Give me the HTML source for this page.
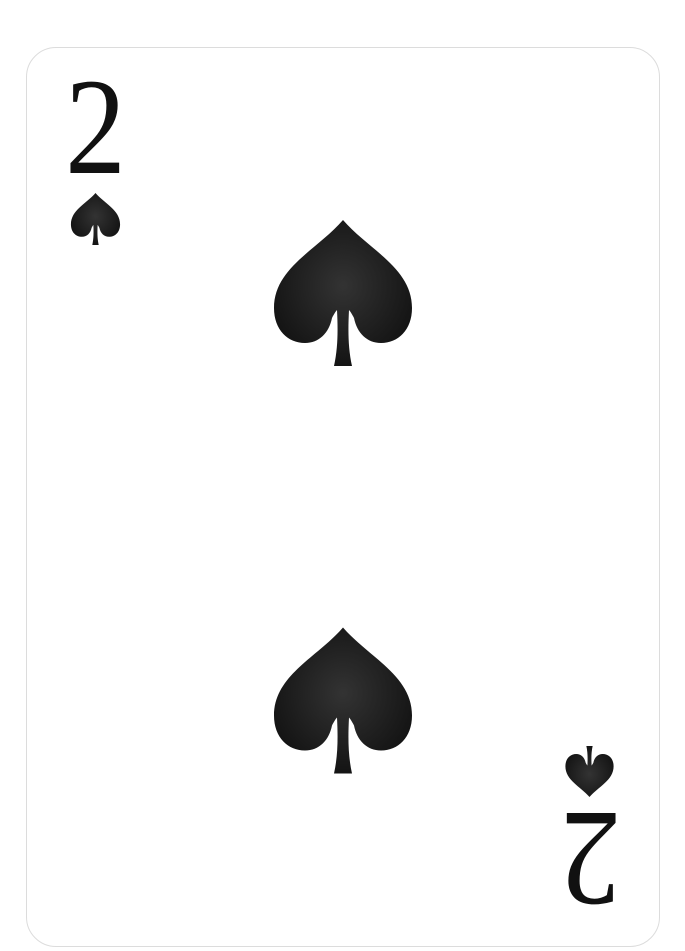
<!DOCTYPE html>
<html><head><style>
body{margin:0;width:685px;height:951px;background:#fff;position:relative;overflow:hidden}
.card{position:absolute;left:26px;top:47px;width:634px;height:900px;border:1px solid #dcdcdc;border-radius:30px;box-sizing:border-box}
.num{position:absolute;font-family:"Liberation Serif",serif;font-size:138px;line-height:1;color:#111;width:69px;height:100px;text-align:center}
.num span{display:block;transform:scaleX(0.88)}
svg{position:absolute}
</style></head><body>
<div class="card"></div>
<svg width="0" height="0" style="position:absolute"><defs>
<radialGradient id="g" cx="0.5" cy="0.45" r="0.6"><stop offset="0" stop-color="#333"/><stop offset="1" stop-color="#111"/></radialGradient>
<symbol id="sp" viewBox="0 0 138 146"><path fill="url(#g)" d="M69,0 C95,30 138,48 138,88 C138,110 124,123 107,123 C93,123 83,113 80,98 C78,94 76,91 75,90 C74,110 74,128 78,146 L60,146 C64,128 64,110 63,90 C62,91 60,94 58,98 C55,113 45,123 31,123 C14,123 0,110 0,88 C0,48 43,30 69,0 Z M69,62 L84,78 L69,93 L54,78 Z"/></symbol>
</defs></svg>
<div class="num" style="left:61px;top:58px"><span>2</span></div>
<svg style="left:68px;top:193px" width="55" height="52"><use href="#sp" width="55" height="52" preserveAspectRatio="none"/></svg>
<svg style="left:274px;top:220px" width="138" height="146"><use href="#sp" width="138" height="146"/></svg>
<svg style="left:274px;top:627px;" width="138" height="147"><use href="#sp" width="138" height="147" preserveAspectRatio="none"/></svg>
<svg style="left:562px;top:746px;transform:rotate(180deg)" width="55" height="51"><use href="#sp" width="55" height="51" preserveAspectRatio="none"/></svg>
<div class="num" style="left:556px;top:828px;transform:rotate(180deg)"><span>2</span></div>
</body></html>
